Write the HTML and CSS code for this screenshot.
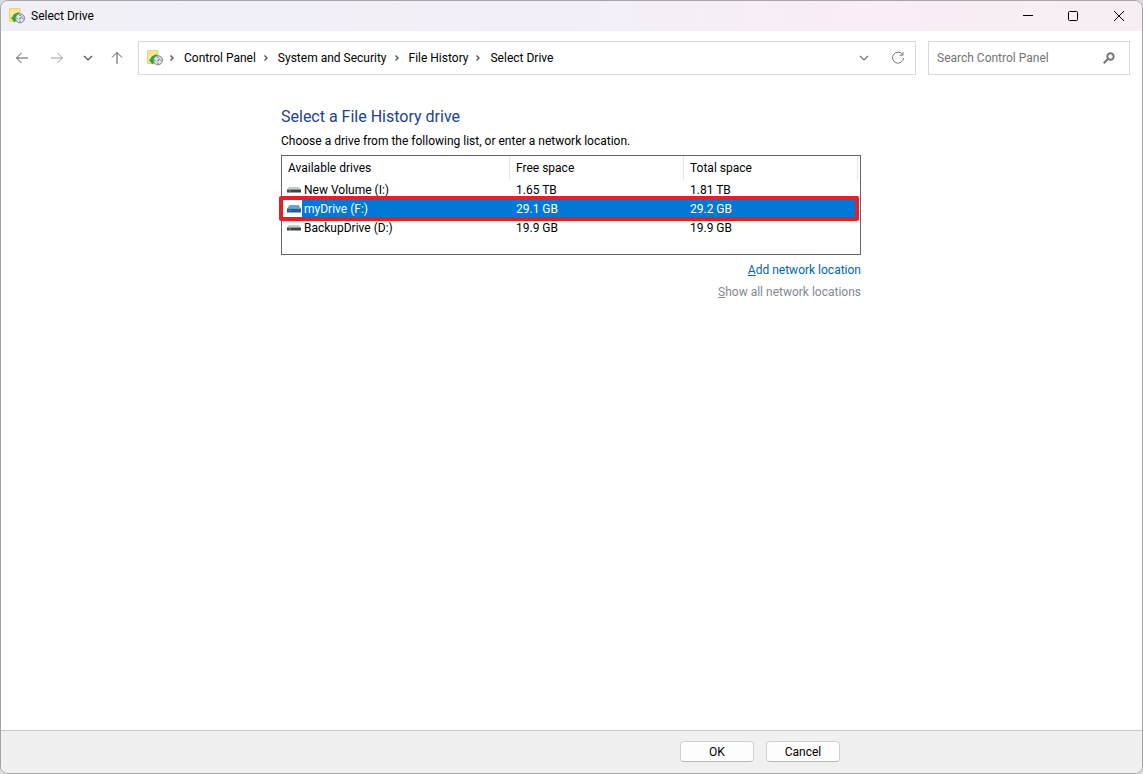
FILE: index.html
```
<!DOCTYPE html>
<html lang="en">
<head>
    <meta charset="UTF-8">
    <meta name="viewport" content="width=device-width, initial-scale=1.0">
    <title>Select Drive</title>
    <link rel="stylesheet" href="styles.css">
</head>
<body>
    <!-- Shared icons -->
    <svg class="icon-defs" aria-hidden="true">
        <symbol id="file-history" viewBox="0 0 16 16">
            <path d="M.5 .5h10.500v13H.5z" fill="#fbe596" stroke="#ecd26b"/>
            <path d="M10.500 4.500C6 4.500 3.500 7 3.500 9.500H1.500l4 5 3.500-5H6.800C7 8 8.500 6.500 10.500 6.500z" fill="#2fa836"/>
            <circle cx="11" cy="10.300" r="4.500" fill="#dfe4e8" stroke="#7b858c"/>
            <path d="M11 7v1M11 12.800v1M7.500 10.300h1M13.500 10.300h1M10.300 11.500l2.500-3" stroke="#4e5a63" fill="none"/>
        </symbol>
        <symbol id="drive" viewBox="0 0 14 8">
            <path d="M2 1h10l2 2.500H0z" fill="#c9c9c9"/>
            <path d="M0 3.500h14v3H0z" fill="#3f4345"/>
            <path d="M2 5h1.500" stroke="#59d667"/>
        </symbol>
        <symbol id="drive-selected" viewBox="0 0 14 8">
            <path d="M2.500 0h9L14 3.500H0z" fill="#65a5d5"/>
            <path d="M0 3.500h14v4H0z" fill="#245f91"/>
            <path d="M2 5.500h1.500" stroke="#36a7d5"/>
        </symbol>
        <symbol id="crumb-arrow" viewBox="0 0 6 8">
            <path d="M1.500 1.500L4 4 1.500 6.500" fill="none" stroke="#555" stroke-width="1.400"/>
        </symbol>
        <symbol id="chevron-down" viewBox="0 0 10 6">
            <path d="M1 1l4 4 4-4" fill="none" stroke="currentColor" stroke-width="1.200"/>
        </symbol>
    </svg>

    <div class="window">
        <header class="title-bar">
            <svg class="app-icon"><use href="#file-history"/></svg>
            <span class="title">Select Drive</span>
            <div class="window-controls">
                <button type="button" aria-label="Minimize">
                    <svg width="12" height="12" viewBox="0 0 12 12"><path d="M2 5.500h10"/></svg>
                </button>
                <button type="button" aria-label="Maximize">
                    <svg width="12" height="12" viewBox="0 0 12 12"><rect x="1.500" y="1.500" width="9" height="9" rx="1"/></svg>
                </button>
                <button type="button" aria-label="Close">
                    <svg width="12" height="12" viewBox="0 0 12 12"><path d="M1 1l10 10M11 1L1 11"/></svg>
                </button>
            </div>
        </header>

        <nav class="nav-bar">
            <div class="nav-buttons">
                <button type="button" aria-label="Back">
                    <svg width="14" height="12" viewBox="0 0 14 12"><path d="M13 6H1.500M6.500 1l-5 5 5 5"/></svg>
                </button>
                <button type="button" class="forward" aria-label="Forward" disabled>
                    <svg width="14" height="12" viewBox="0 0 14 12"><path d="M1 6h11.500M7.500 1l5 5-5 5"/></svg>
                </button>
                <button type="button" class="recent" aria-label="Recent locations">
                    <svg width="10" height="6"><use href="#chevron-down"/></svg>
                </button>
                <button type="button" class="up" aria-label="Up">
                    <svg width="12" height="14" viewBox="0 0 12 14"><path d="M6 13V1.500M1 6.500l5-5 5 5"/></svg>
                </button>
            </div>

            <div class="address-bar">
                <svg class="app-icon"><use href="#file-history"/></svg>
                <ol class="crumbs">
                    <li><svg><use href="#crumb-arrow"/></svg><a href="#">Control Panel</a></li>
                    <li><svg><use href="#crumb-arrow"/></svg><a href="#">System and Security</a></li>
                    <li><svg><use href="#crumb-arrow"/></svg><a href="#">File History</a></li>
                    <li><svg><use href="#crumb-arrow"/></svg><a href="#">Select Drive</a></li>
                </ol>
                <button type="button" aria-label="Previous locations">
                    <svg width="10" height="6"><use href="#chevron-down"/></svg>
                </button>
                <button type="button" aria-label="Refresh">
                    <svg width="14" height="14" viewBox="0 0 14 14"><path d="M11.500 3.500A5.500 5.500 0 1 0 12.500 7M12 .8v3.400H8.500"/></svg>
                </button>
            </div>

            <div class="search-box">
                <input type="text" placeholder="Search Control Panel" aria-label="Search Control Panel">
                <button type="button" aria-label="Search">
                    <svg width="12" height="12" viewBox="0 0 12 12"><circle cx="7.500" cy="4.500" r="3.200"/><path d="M5 7l-4.300 4.300"/></svg>
                </button>
            </div>
        </nav>

        <main class="content">
            <h1>Select a File History drive</h1>
            <p>Choose a drive from the following list, or enter a network location.</p>

            <div class="drive-list">
                <table>
                    <thead>
                        <tr>
                            <th scope="col">Available drives</th>
                            <th scope="col" class="size">Free space</th>
                            <th scope="col" class="size">Total space</th>
                        </tr>
                    </thead>
                    <tbody>
                        <tr>
                            <td class="drive"><div><svg><use href="#drive"/></svg><span>New Volume (I:)</span></div></td>
                            <td>1.65 TB</td>
                            <td>1.81 TB</td>
                        </tr>
                        <tr class="selected">
                            <td class="drive"><div><svg><use href="#drive-selected"/></svg><span>myDrive (F:)</span></div></td>
                            <td>29.1 GB</td>
                            <td>29.2 GB</td>
                        </tr>
                        <tr>
                            <td class="drive"><div><svg><use href="#drive"/></svg><span>BackupDrive (D:)</span></div></td>
                            <td>19.9 GB</td>
                            <td>19.9 GB</td>
                        </tr>
                    </tbody>
                </table>
            </div>

            <div class="links">
                <a href="#"><u>A</u>dd network location</a>
                <a href="#" class="disabled" aria-disabled="true"><u>S</u>how all network locations</a>
            </div>
        </main>

        <footer class="footer">
            <div class="footer-buttons">
                <button type="button">OK</button>
                <button type="button">Cancel</button>
            </div>
        </footer>
    </div>
</body>
</html>
```
FILE: styles.css
```
* {
    box-sizing: border-box;
}

body {
    margin: 0;
    background: #dcdcdc;
    font-family: Roboto, "Open Sans", sans-serif;
    font-size: 12px;
    line-height: 16px;
    color: #000;
}

button {
    display: flex;
    align-items: center;
    justify-content: center;
    padding: 0;
    border: none;
    background: none;
    color: inherit;
    font: inherit;
}

button svg {
    fill: none;
    stroke: currentColor;
}

a {
    color: inherit;
    text-decoration: none;
}

.icon-defs {
    display: none;
}

.app-icon {
    width: 16px;
    height: 16px;
    flex: none;
}

.window {
    display: flex;
    flex-direction: column;
    min-height: 100vh;
    border: 1px solid #a5a3a5;
    border-radius: 8px;
    background: #fff;
    overflow: hidden;
}

/* Title bar */
.title-bar {
    display: flex;
    align-items: center;
    gap: 6px;
    height: 30px;
    padding-left: 8px;
    background: linear-gradient(to right, #f1f0f7, #f3eff8 50%, #f9edf7 75%, #f7eef3);
}

.window-controls {
    display: flex;
    align-self: stretch;
    margin-left: auto;
}

.window-controls button {
    width: 46px;
}

/* Navigation */
.nav-bar {
    display: flex;
    align-items: center;
    padding: 10px 12px 10px 6px;
}

.nav-buttons {
    display: flex;
    width: 131px;
    color: #555;
}

.nav-buttons button {
    width: 30px;
    height: 30px;
}

.nav-buttons .forward {
    width: 40px;
    color: #999;
}

.nav-buttons .recent {
    width: 22px;
}

.nav-buttons .up {
    width: 36px;
}

.address-bar {
    display: flex;
    flex: 1;
    align-items: center;
    height: 34px;
    padding-left: 8px;
    border: 1px solid #d9d9d9;
    color: #777;
}

.address-bar button {
    width: 34px;
    height: 32px;
}

.crumbs {
    display: flex;
    flex: 1;
    margin: 0;
    padding: 0 0 0 6px;
    list-style: none;
    color: #000;
}

.crumbs li {
    display: flex;
    align-items: center;
    gap: 9px;
    margin-right: 7px;
}

.crumbs svg {
    width: 6px;
    height: 8px;
}

.search-box {
    display: flex;
    align-items: center;
    width: 202px;
    height: 34px;
    margin-left: 12px;
    border: 1px solid #d9d9d9;
}

.search-box input {
    flex: 1;
    min-width: 0;
    padding: 0 8px;
    border: none;
    outline: none;
    background: none;
    font: inherit;
}

.search-box input::placeholder {
    color: #737373;
    opacity: 1;
}

.search-box button {
    width: 40px;
    height: 32px;
    color: #777;
}

.search-box button svg {
    stroke-width: 2;
}

/* Content */
.content {
    flex: 1;
    width: 100%;
    max-width: 581px;
    margin: 0 auto;
    padding: 20px 1px 0 0;
}

h1 {
    margin: 0;
    font-size: 16px;
    font-weight: 400;
    line-height: 24px;
    color: #1c438c;
}

.content p {
    margin: 4px 0 6px;
}

.drive-list {
    height: 100px;
    padding-right: 2px;
    border: 1px solid #646464;
}

.drive-list table {
    width: 100%;
    border-spacing: 0;
    table-layout: fixed;
}

.drive-list th {
    height: 24px;
    padding: 0 6px;
    border-right: 1px solid #e5e5e5;
    font-weight: 400;
    text-align: left;
}

.drive-list th.size {
    width: 174px;
}

.drive-list td {
    height: 19px;
    padding: 0 6px;
}

.drive-list .drive {
    padding: 0;
}

.drive div {
    display: flex;
    align-items: center;
    padding-left: 5px;
}

.drive svg {
    width: 14px;
    height: 8px;
    margin-right: 1px;
}

.drive span {
    flex: 1;
    padding: 2px 0 1px 2px;
}

.selected {
    position: relative;
    color: #fff;
}

.selected td:not(.drive),
.selected span {
    background: #0078d7;
}

/* Red frame around the chosen drive */
.selected td:last-child::after {
    content: '';
    position: absolute;
    inset: -3px -1px -3px -3px;
    border: 4px solid #e41f26;
    border-radius: 2px;
    pointer-events: none;
}

.links {
    display: flex;
    flex-direction: column;
    align-items: flex-end;
    gap: 6px;
    padding-top: 7px;
    color: #0066b4;
}

.links .disabled {
    color: #838799;
}

/* Footer */
.footer {
    padding: 10px 0 11px;
    border-top: 1px solid #c8c8c8;
    background: #f0f0f0;
}

.footer-buttons {
    display: flex;
    justify-content: flex-end;
    gap: 12px;
    max-width: 581px;
    margin: 0 auto;
    padding-right: 22px;
}

.footer-buttons button {
    width: 74px;
    height: 21px;
    border: 1px solid #d0d0d0;
    border-bottom-color: #bababa;
    border-radius: 4px;
    background: #fdfdfd;
}
```
